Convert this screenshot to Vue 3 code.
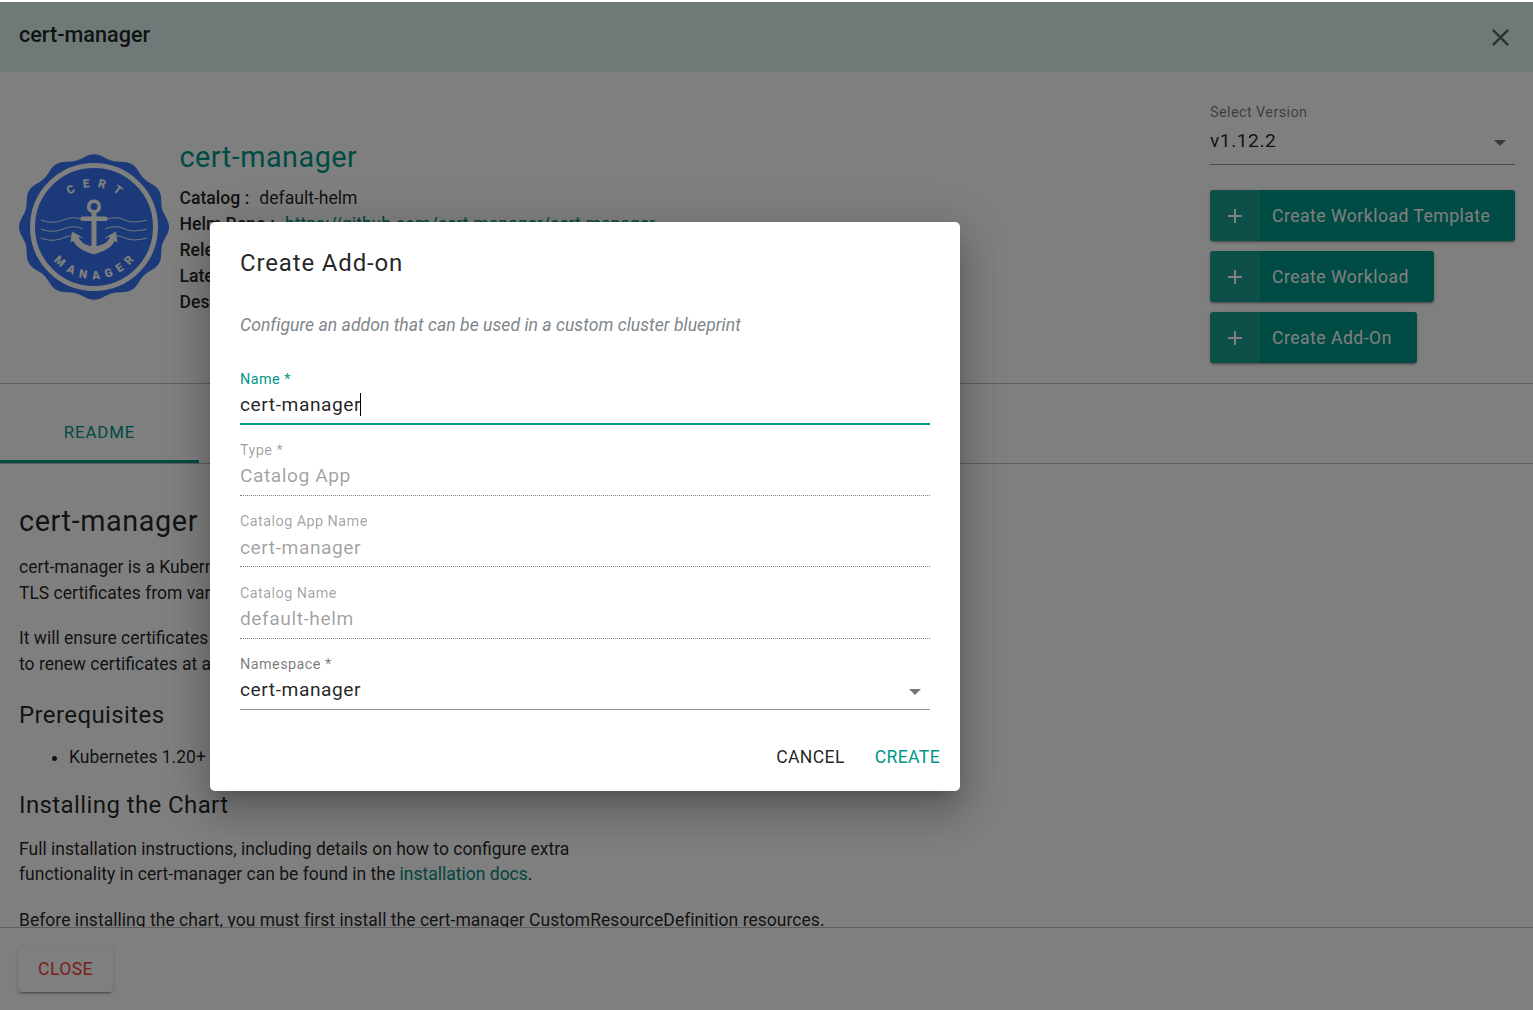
<template>
  <div class="page">
    <header class="topbar">
      <span class="topbar-title">cert-manager</span>
      <svg class="close-icon" viewBox="0 0 24 24" width="29" height="29"><path d="M19 6.41 17.59 5 12 10.59 6.41 5 5 6.41 10.59 12 5 17.59 6.41 19 12 13.41 17.59 19 19 17.59 13.41 12z" fill="currentColor"/></svg>
    </header>

    <section class="hero">
      <svg class="logo" viewBox="0 0 150 150" width="150" height="150">
        <path :d="badgePath" fill="#3874f4"/>
        <circle cx="75" cy="75" r="61.5" fill="none" stroke="#fff" stroke-width="5"/>
        <defs>
          <path id="arcTop" d="M 35 75 A 40 40 0 0 1 115 75"/>
          <path id="arcBottom" d="M 23 75 A 52 52 0 0 0 127 75"/>
        </defs>
        <text class="logo-text top"><textPath href="#arcTop" startOffset="53%" text-anchor="middle">CERT</textPath></text>
        <text class="logo-text"><textPath href="#arcBottom" startOffset="52%" text-anchor="middle">MANAGER</textPath></text>
        <g fill="none" stroke="#fff" stroke-width="0.9">
          <path d="M22 68c8 3 14 3 22 0s14-3 20 0M86 68c6-3 14-3 20 0s14 2 22 0"/>
          <path d="M22 77c8 3 14 3 22 0s14-3 20 0M86 77c6-3 14-3 20 0s14 2 22 0"/>
          <path d="M22 86c8 3 14 3 22 0s14-3 20 0M86 86c6-3 14-3 20 0s14 2 22 0"/>
        </g>
        <path fill="#fff" fill-rule="evenodd" d="M75 47.500a7 7 0 0 1 2.500 13.540V64.500h9a2.200 2.200 0 0 1 0 4.400h-9V94c6-.6 11-3.500 13.500-8.500L88 84.500l9-5 1.500 11-2.800-1.600C92 96 85 99 75 102.500 65 99 58 96 54.300 88.900L51.500 90.500 53 79.500l9 5-2.500 1C62 90.500 67 93.400 72.500 94V68.900h-9a2.200 2.200 0 0 1 0-4.400h9v-3.460A7 7 0 0 1 75 47.500zm0 3.500a3.500 3.500 0 1 0 0 7 3.500 3.500 0 0 0 0-7z"/>
      </svg>

      <div class="hero-info">
        <h1 class="hero-title">cert-manager</h1>
        <div v-for="row in infoRows" :key="row.label" class="info-row">
          <b>{{ row.label }} :</b>
          <a v-if="row.link" class="link">{{ row.value }}</a>
          <span v-else>{{ row.value }}</span>
        </div>
      </div>

      <div class="hero-actions">
        <div class="version">
          <label>Select Version</label>
          <div class="version-value">
            <span>v1.12.2</span>
            <i class="caret"></i>
          </div>
        </div>
        <button v-for="action in actions" :key="action" class="action-btn">
          <span class="action-icon">
            <svg viewBox="0 0 24 24" width="24" height="24"><path d="M19 13h-6v6h-2v-6H5v-2h6V5h2v6h6z" fill="currentColor"/></svg>
          </span>
          <span class="action-label">{{ action }}</span>
        </button>
      </div>
    </section>

    <nav class="tabs">
      <div class="tab">README</div>
    </nav>

    <main class="readme">
      <h2>cert-manager</h2>
      <p>cert-manager is a Kubernetes add-on to automate the management and issuance of<br>TLS certificates from various issuing sources.</p>
      <p>It will ensure certificates are valid and up to date periodically, and attempt<br>to renew certificates at an appropriate time before expiry.</p>
      <h3>Prerequisites</h3>
      <ul><li>Kubernetes 1.20+</li></ul>
      <h3>Installing the Chart</h3>
      <p>Full installation instructions, including details on how to configure extra<br>functionality in cert-manager can be found in the <a class="link">installation docs</a>.</p>
      <p class="wide">Before installing the chart, you must first install the cert-manager CustomResourceDefinition resources.</p>
    </main>

    <footer class="bottom">
      <button class="close-btn">CLOSE</button>
    </footer>

    <div class="overlay"></div>

    <div class="dialog">
      <div class="dialog-title">Create Add-on</div>
      <p class="dialog-desc">Configure an addon that can be used in a custom cluster blueprint</p>
      <div class="fields">
        <div v-for="f in fields" :key="f.label" class="field" :class="f.state">
          <label>{{ f.label }}</label>
          <div class="field-value">
            <span>{{ f.value }}</span><i v-if="f.state === 'focus'" class="cursor"></i>
            <i v-if="f.state === 'select'" class="caret"></i>
          </div>
        </div>
      </div>
      <div class="dialog-actions">
        <button class="text-btn">CANCEL</button>
        <button class="text-btn primary">CREATE</button>
      </div>
    </div>
  </div>
</template>

<script setup>
const infoRows = [
  { label: 'Catalog', value: 'default-helm' },
  { label: 'Helm Repo', value: 'https://github.com/cert-manager/cert-manager', link: true },
  { label: 'Release', value: 'cert-manager' },
  { label: 'Latest', value: 'v1.12.2' },
  { label: 'Description', value: 'cert-manager' }
]

const actions = ['Create Workload Template', 'Create Workload', 'Create Add-On']

const fields = [
  { label: 'Name *', value: 'cert-manager', state: 'focus' },
  { label: 'Type *', value: 'Catalog App', state: 'disabled' },
  { label: 'Catalog App Name', value: 'cert-manager', state: 'disabled' },
  { label: 'Catalog Name', value: 'default-helm', state: 'disabled' },
  { label: 'Namespace *', value: 'cert-manager', state: 'select' }
]

// wavy seal outline
const points = []
for (let i = 0; i < 240; i++) {
  const a = (i / 240) * Math.PI * 2
  const r = 72.8 + 2.2 * Math.cos(a * 12)
  points.push(`${(75 + r * Math.cos(a)).toFixed(2)} ${(75 + r * 0.97 * Math.sin(a)).toFixed(2)}`)
}
const badgePath = `M${points.join('L')}Z`
</script>

<style>
html, body { margin: 0; height: 100%; overflow: hidden; }
</style>

<style scoped>
.page {
  position: relative;
  height: 1010px;
  display: flex;
  flex-direction: column;
  background: #fff;
  color: rgba(0, 0, 0, 0.87);
  font-family: Roboto, "Liberation Sans", sans-serif;
  overflow: hidden;
}

.topbar {
  height: 70px;
  margin-top: 2px;
  flex: none;
  display: flex;
  align-items: center;
  justify-content: space-between;
  padding: 0 20px 0 19px;
  box-sizing: border-box;
  background: #dff4f0;
}

.topbar-title {
  font-size: 21.6px;
  font-weight: 500;
  margin-top: -4.5px;
}

.close-icon {
  color: rgba(0, 0, 0, 0.6);
  margin-right: -2px;
}

.hero {
  flex: none;
  height: 312px;
  box-sizing: border-box;
  display: flex;
  padding: 0 18px 0 19px;
  border-bottom: 1px solid #bdbdbd;
}

.logo {
  flex: none;
  margin-top: 79.5px;
}

.hero-info {
  flex: 1;
  padding: 67px 0 0 10.5px;
}

.hero-title {
  margin: 0 0 10px;
  font-size: 28.8px;
  line-height: 36px;
  font-weight: 400;
  letter-spacing: 0.5px;
  color: #009688;
}

.info-row {
  font-size: 17.6px;
  line-height: 26px;
}

.info-row b {
  font-weight: 500;
  margin-right: 10px;
}

.link {
  color: #00897b;
}

.hero-actions {
  flex: none;
  width: 305px;
  padding-top: 30px;
  display: flex;
  flex-direction: column;
  align-items: flex-start;
  gap: 10px;
}

.version {
  align-self: stretch;
  height: 78px;
  font-size: 14.4px;
  color: rgba(0, 0, 0, 0.54);
}

.version label {
  display: block;
  line-height: 20px;
  letter-spacing: 0.42px;
  padding-top: 1px;
  margin-bottom: -1px;
}

.version-value {
  height: 43px;
  box-sizing: border-box;
  display: flex;
  align-items: center;
  justify-content: space-between;
  padding: 0 9px 5px 0;
  font-size: 19.2px;
  color: rgba(0, 0, 0, 0.87);
  letter-spacing: 0.55px;
  border-bottom: 1px solid rgba(0, 0, 0, 0.42);
}

.caret {
  display: block;
  width: 0;
  height: 0;
  border-left: 6.500px solid transparent;
  border-right: 6.500px solid transparent;
  border-top: 6.500px solid rgba(0, 0, 0, 0.54);
  margin-top: 5px;
}

.action-btn {
  display: flex;
  align-items: stretch;
  height: 51px;
  padding: 0;
  border: 0;
  border-radius: 3px;
  background: #009688;
  color: #fff;
  font: inherit;
  overflow: hidden;
  box-shadow: 0 3px 1px -2px rgba(0, 0, 0, 0.2), 0 2px 2px 0 rgba(0, 0, 0, 0.14), 0 1px 5px 0 rgba(0, 0, 0, 0.12);
}

.action-icon {
  width: 50px;
  display: flex;
  align-items: center;
  justify-content: center;
  background: rgba(255, 255, 255, 0.1);
}

.action-label {
  display: flex;
  align-items: center;
  padding: 0 25px 0 12px;
  font-size: 17.6px;
  font-weight: 400;
  letter-spacing: 0.48px;
  white-space: nowrap;
}

.tabs {
  flex: none;
  height: 80px;
  box-sizing: border-box;
  border-bottom: 1px solid #bdbdbd;
}

.tab {
  width: 199px;
  height: 79px;
  box-sizing: border-box;
  display: flex;
  align-items: center;
  justify-content: center;
  padding-top: 19px;
  font-size: 16.800px;
  letter-spacing: 0.9px;
  color: #009688;
  border-bottom: 3px solid #009688;
}

.readme {
  flex: 1;
  min-height: 0;
  overflow: hidden;
  padding: 39px 19px 0;
  font-size: 17.5px;
  line-height: 25.5px;
}

.readme h2 {
  margin: 0 0 16px;
  font-size: 28.8px;
  line-height: 36px;
  font-weight: 400;
  letter-spacing: 0.6px;
}

.readme h3 {
  margin: 22px 0 16px;
  font-size: 24px;
  line-height: 32px;
  font-weight: 400;
  letter-spacing: 0.4px;
}

.readme ul + h3 {
  margin-top: 18px;
}

.readme p {
  margin: 0 0 20px;
}

.readme p.wide {
  letter-spacing: 0.03px;
}

.readme ul {
  margin: -2px 0 13px;
  padding-left: 50px;
}

.bottom {
  flex: none;
  height: 83px;
  box-sizing: border-box;
  padding: 19px 18px;
  border-top: 1px solid #bdbdbd;
}

.close-btn {
  width: 95px;
  height: 45px;
  border: 0;
  border-radius: 4px;
  background: #fff;
  color: #f44336;
  font: inherit;
  font-size: 17.6px;
  letter-spacing: 0.4px;
  padding: 0 0 2px;
  box-shadow: 0 3px 1px -2px rgba(0, 0, 0, 0.2), 0 2px 2px 0 rgba(0, 0, 0, 0.14), 0 1px 5px 0 rgba(0, 0, 0, 0.12);
}

.overlay {
  position: absolute;
  inset: 2px 0 0;
  background: rgba(0, 0, 0, 0.5);
}

.dialog {
  position: absolute;
  left: 210px;
  top: 222px;
  width: 750px;
  height: 569px;
  box-sizing: border-box;
  padding: 25px 30px 0;
  background: #fff;
  border-radius: 5px;
  box-shadow: 0 11px 15px -7px rgba(0, 0, 0, 0.2), 0 24px 38px 3px rgba(0, 0, 0, 0.14), 0 9px 46px 8px rgba(0, 0, 0, 0.12);
}

.dialog-title {
  font-size: 24px;
  line-height: 32px;
  font-weight: 400;
  letter-spacing: 0.85px;
  color: rgba(0, 0, 0, 0.87);
}

.dialog-desc {
  margin: 34px 0 0;
  font-size: 17.6px;
  line-height: 24px;
  font-style: italic;
  letter-spacing: 0.02px;
  color: #80868b;
}

.fields {
  margin-top: 33.7px;
}

.field {
  height: 71.3px;
}

.field label {
  display: block;
  font-size: 14.4px;
  line-height: 17px;
  letter-spacing: 0.45px;
  color: rgba(0, 0, 0, 0.54);
}

.field-value {
  height: 37px;
  box-sizing: border-box;
  display: flex;
  align-items: center;
  font-size: 19.2px;
  font-weight: 400;
  letter-spacing: 0.55px;
  padding-bottom: 2px;
  border-bottom: 1px solid rgba(0, 0, 0, 0.42);
}

.field.focus label {
  color: #009688;
}

.field.focus .field-value {
  border-bottom: 2px solid #009688;
}

.cursor {
  display: block;
  width: 1px;
  height: 23px;
  margin-left: -1px;
  background: #000;
}

.field.disabled label,
.field.disabled .field-value {
  color: rgba(0, 0, 0, 0.38);
}

.field.disabled .field-value {
  border-bottom: 1px dotted rgba(0, 0, 0, 0.5);
}

.field.select .field-value {
  justify-content: space-between;
  padding-right: 9px;
}

.dialog-actions {
  display: flex;
  justify-content: flex-end;
  gap: 30px;
  margin: 18.3px -10px 0 0;
}

.text-btn {
  border: 0;
  padding: 0;
  background: none;
  font: inherit;
  font-size: 17.6px;
  line-height: 24px;
  letter-spacing: 0.35px;
  color: rgba(0, 0, 0, 0.87);
}

.text-btn.primary {
  color: #009688;
}

.logo-text {
  font-family: Roboto, sans-serif;
  font-size: 11.5px;
  font-weight: 900;
  letter-spacing: 6px;
  fill: #fff;
}

.logo-text.top {
  letter-spacing: 8px;
}
</style>
